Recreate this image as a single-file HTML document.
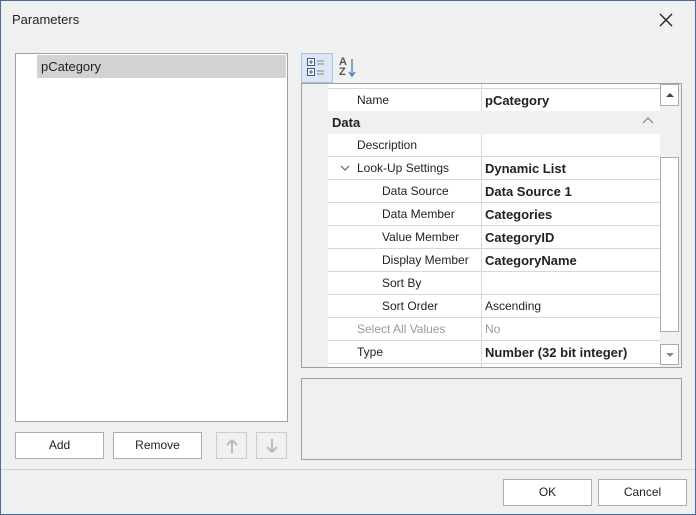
<!DOCTYPE html><html><head><style>
*{box-sizing:border-box;margin:0;padding:0}
body{width:696px;height:515px;overflow:hidden;background:#f0f0f0;font-family:"Liberation Sans",sans-serif;font-size:12px;color:#222;position:relative}
.a{position:absolute}
.frame{left:0;top:0;width:696px;height:515px;border:1px solid #4a6a9a}
.btn{position:absolute;background:#fff;border:1px solid #adadad;text-align:center;line-height:24px;font-size:12px;color:#222}
.row{position:absolute;left:328px;width:332px;height:23px;border-bottom:1px solid #d8d8d8;background:#fff}
.row .n{position:absolute;top:0;line-height:23px}
.row .v{position:absolute;left:153px;top:0;height:22px;width:179px;border-left:1px solid #d8d8d8;line-height:23px;padding-left:3px}
.b{font-weight:bold;font-size:13px}
</style></head><body>
<div class="a frame"></div>
<div class="a" style="left:12px;top:12px;font-size:13px">Parameters</div>
<svg class="a" style="left:658px;top:12px" width="16" height="16"><path d="M2 2L14 14M14 2L2 14" stroke="#222" stroke-width="1.4"/></svg>
<div class="a" style="left:15px;top:53px;width:273px;height:369px;background:#fff;border:1px solid #a0a0a0"></div>
<div class="a" style="left:37px;top:55px;width:249px;height:23px;background:#d2d2d2;line-height:23px;padding-left:4px;font-size:13px">pCategory</div>
<div class="btn" style="left:15px;top:432px;width:89px;height:27px">Add</div>
<div class="btn" style="left:113px;top:432px;width:89px;height:27px">Remove</div>
<div class="btn" style="left:216px;top:432px;width:31px;height:27px;background:#f0f0f0;border-color:#ccc"><svg width="14" height="16" style="margin-top:5px"><path d="M7 2L2 7M7 2L12 7M7 2V15" stroke="#bbb" stroke-width="2" fill="none"/></svg></div>
<div class="btn" style="left:256px;top:432px;width:31px;height:27px;background:#f0f0f0;border-color:#ccc"><svg width="14" height="16" style="margin-top:5px"><path d="M7 14L2 9M7 14L12 9M7 14V1" stroke="#bbb" stroke-width="2" fill="none"/></svg></div>
<div class="a" style="left:301px;top:53px;width:32px;height:30px;background:#dce6f4;border:1px solid #a8c0e0"></div>
<svg class="a" style="left:306px;top:57px" width="24" height="22"><rect x="1.5" y="1.5" width="7" height="7" fill="#fff" stroke="#3a5a8a"/><rect x="1.5" y="11.5" width="7" height="7" fill="#fff" stroke="#3a5a8a"/><path d="M3 5h4M5 3v4M3 15h4M5 13v4" stroke="#3a5a8a"/><path d="M11 4h7M11 7h7M11 14h7M11 17h7" stroke="#888"/></svg>
<div class="a" style="left:339px;top:57px;font-size:11px;font-weight:bold;line-height:10px;color:#555">A<br>Z</div>
<svg class="a" style="left:348px;top:58px" width="8" height="20"><path d="M4 1V17M1 14L4 18L7 14" stroke="#3b78c4" stroke-width="1.3" fill="none"/></svg>
<div class="a" style="left:301px;top:83px;width:381px;height:285px;background:#f0f0f0;border:1px solid #a0a0a0"></div>
<div class="a" style="left:328px;top:84px;width:332px;height:5px;background:#fff;border-bottom:1px solid #d8d8d8"></div>
<div class="a" style="left:481px;top:84px;width:1px;height:5px;background:#d8d8d8"></div>
<div class="row" style="top:89px"><div class="n" style="left:29px">Name</div><div class="v b">pCategory</div></div>
<div class="a" style="left:302px;top:111px;width:358px;height:23px;background:#f0f0f0;line-height:23px;padding-left:30px" ><b style="font-size:13px">Data</b></div>
<svg class="a" style="left:642px;top:117px" width="12" height="8"><path d="M1 6L6 1L11 6" stroke="#777" fill="none"/></svg>
<div class="row" style="top:134px"><div class="n" style="left:29px">Description</div><div class="v"></div></div>
<div class="row" style="top:157px"><svg class="a" style="left:12px;top:8px" width="10" height="7"><path d="M1 1L5 5L9 1" stroke="#555" fill="none"/></svg><div class="n" style="left:29px">Look-Up Settings</div><div class="v b">Dynamic List</div></div>
<div class="row" style="top:180px"><div class="n" style="left:54px">Data Source</div><div class="v b">Data Source 1</div></div>
<div class="row" style="top:203px"><div class="n" style="left:54px">Data Member</div><div class="v b">Categories</div></div>
<div class="row" style="top:226px"><div class="n" style="left:54px">Value Member</div><div class="v b">CategoryID</div></div>
<div class="row" style="top:249px"><div class="n" style="left:54px">Display Member</div><div class="v b">CategoryName</div></div>
<div class="row" style="top:272px"><div class="n" style="left:54px">Sort By</div><div class="v"></div></div>
<div class="row" style="top:295px"><div class="n" style="left:54px">Sort Order</div><div class="v">Ascending</div></div>
<div class="row" style="top:318px;color:#999"><div class="n" style="left:29px">Select All Values</div><div class="v">No</div></div>
<div class="row" style="top:341px"><div class="n" style="left:29px">Type</div><div class="v b">Number (32 bit integer)</div></div>
<div class="a" style="left:328px;top:364px;width:332px;height:3px;background:#fff"></div>
<div class="a" style="left:481px;top:364px;width:1px;height:3px;background:#d8d8d8"></div>
<div class="a" style="left:660px;top:84px;width:21px;height:283px;background:#f0f0f0"></div>
<div class="a" style="left:660px;top:84px;width:19px;height:22px;background:#fff;border:1px solid #aaa"></div>
<svg class="a" style="left:665px;top:92px" width="10" height="6"><path d="M1 5L5 1L9 5Z" fill="#444"/></svg>
<div class="a" style="left:660px;top:157px;width:19px;height:175px;background:#fff;border:1px solid #aaa"></div>
<div class="a" style="left:660px;top:344px;width:19px;height:21px;background:#fff;border:1px solid #aaa"></div>
<svg class="a" style="left:665px;top:352px" width="10" height="6"><path d="M1 1L5 5L9 1Z" fill="#888"/></svg>
<div class="a" style="left:301px;top:378px;width:381px;height:82px;border:1px solid #a0a0a0"></div>
<div class="a" style="left:1px;top:469px;width:694px;height:1px;background:#d0d0d0"></div>
<div class="btn" style="left:503px;top:479px;width:89px;height:27px">OK</div>
<div class="btn" style="left:598px;top:479px;width:89px;height:27px">Cancel</div>
</body></html>
